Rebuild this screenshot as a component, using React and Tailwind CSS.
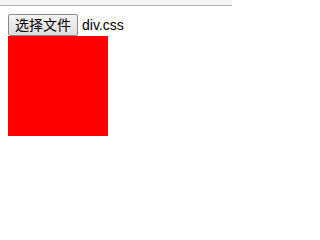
export default function App() {
  return (
    <div className="w-[232px] h-[214px] bg-white" style={{ fontFamily: '"Liberation Sans", "Noto Sans CJK SC", sans-serif' }}>
      <div className="h-[6px] bg-[#f3f3f3] border-b border-[#b4b4b4]"></div>
      <div className="pt-[8px] pl-[8px]">
        <div className="flex items-center h-[22px]">
          <button className="h-[22px] w-[70px] border border-[#8a8a8a] rounded-[2px] bg-gradient-to-b from-[#f4f4f4] to-[#dedede] text-[14px] leading-none text-black">
            选择文件
          </button>
          <span className="ml-[4px] text-[14px] text-black">div.css</span>
        </div>
        <div className="w-[100px] h-[100px] bg-[#ff0000]"></div>
      </div>
    </div>
  );
}
